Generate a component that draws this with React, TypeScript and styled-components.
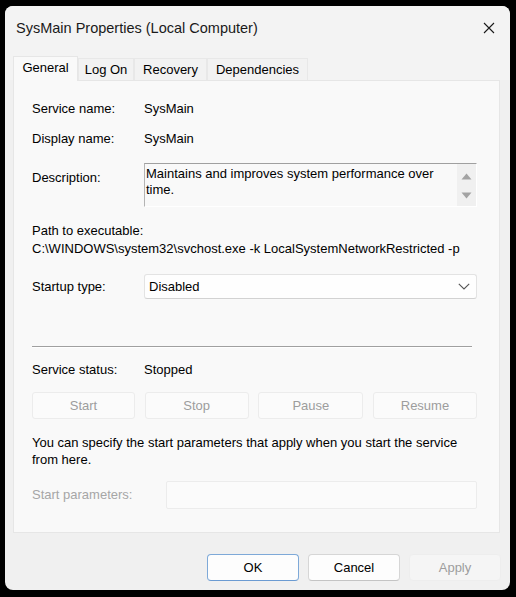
import React from "react";
import styled, { createGlobalStyle } from "styled-components";

const Global = createGlobalStyle`
  html, body { margin: 0; padding: 0; background: #000; }
  body { width: 516px; height: 597px; overflow: hidden; font-family: "Liberation Sans", Arial, sans-serif; }
  * { box-sizing: border-box; }
`;

const Window = styled.div`
  margin: 6px 0 0 5px;
  width: 505px;
  height: 584px;
  border-radius: 8px;
  background: #f0f0f0;
  display: flex;
  flex-direction: column;
  overflow: hidden;
  color: #000;
  font-size: 13px;
`;

const TitleBar = styled.div`
  height: 44px;
  display: flex;
  align-items: center;
  justify-content: space-between;
  padding: 0 15px 0 11px;
  background: #f3f3f3;
`;

const Title = styled.div`
  font-size: 14.5px;
  color: #1a1a1a;
  padding-bottom: 1px;
`;

const CloseIcon = styled.svg`
  width: 12px;
  height: 12px;
  display: block;
`;

const TabStrip = styled.div`
  height: 30px;
  display: flex;
  align-items: flex-end;
  padding-left: 8px;
  background: #f3f3f3;
`;

const Tab = styled.div<{ $w: number; $active?: boolean }>`
  width: ${(p) => p.$w}px;
  height: ${(p) => (p.$active ? 25 : 22)}px;
  display: flex;
  align-items: center;
  justify-content: center;
  background: ${(p) => (p.$active ? "#f9f9f9" : "#f2f2f2")};
  border: 1px solid ${(p) => (p.$active ? "#e6e6e6" : "#e8e8e8")};
  border-bottom: none;
  margin-bottom: ${(p) => (p.$active ? -1 : 0)}px;
  position: relative;
  z-index: ${(p) => (p.$active ? 1 : 0)};
  padding-bottom: ${(p) => (p.$active ? 3 : 0)}px;
  color: #000;
`;

const Panel = styled.div`
  margin: 0 10px 0 8px;
  height: 453px;
  background: #f9f9f9;
  border: 1px solid #e6e6e6;
  padding: 20px 22px 0 18px;
  display: flex;
  flex-direction: column;
`;

const Row = styled.div<{ $top: number; $label?: number; $start?: boolean }>`
  margin-top: ${(p) => p.$top}px;
  display: grid;
  grid-template-columns: ${(p) => p.$label ?? 112}px 1fr;
  align-items: ${(p) => (p.$start ? "start" : "center")};
  line-height: 16px;
`;

const Label = styled.div<{ $dim?: boolean; $pt?: number }>`
  color: ${(p) => (p.$dim ? "#a6a6a6" : "#000")};
  padding-top: ${(p) => p.$pt ?? 0}px;
`;

const Line = styled.div<{ $top: number }>`
  margin-top: ${(p) => p.$top}px;
  line-height: 16px;
  white-space: nowrap;
`;

const DescBox = styled.div`
  height: 44px;
  display: flex;
  border-top: 1px solid #a0a0a0;
  border-left: 1px solid #b4b4b4;
  border-right: 1px solid #ffffff;
  border-bottom: 1px solid #ffffff;
  background: #f9f9f9;
`;

const DescText = styled.div`
  flex: 1;
  padding: 2px 4px 0 1px;
  line-height: 16px;
`;

const ScrollBar = styled.div`
  width: 19px;
  background: #f0f0f0;
  display: flex;
  flex-direction: column;
  align-items: center;
  justify-content: space-between;
  padding: 9px 0 7px;
`;

const Arrow = styled.svg`
  width: 11px;
  height: 7px;
  display: block;
`;

const Select = styled.div`
  height: 25px;
  border: 1px solid #e3e3e3;
  border-bottom-color: #d2d2d2;
  border-radius: 3px;
  background: #fefefe;
  display: flex;
  align-items: center;
  justify-content: space-between;
  padding: 0 6px 0 4px;
`;

const Chevron = styled.svg`
  width: 12px;
  height: 7px;
  display: block;
`;

const Separator = styled.div`
  margin-top: 47px;
  margin-right: 5px;
  height: 2px;
  border-top: 1px solid #a0a0a0;
  border-bottom: 1px solid #ffffff;
`;

const ButtonRow = styled.div`
  margin-top: 14px;
  display: grid;
  grid-template-columns: 103px 104px 105px 104px;
  justify-content: space-between;
`;

const DisabledButton = styled.div`
  height: 27px;
  border: 1px solid #ececec;
  border-radius: 3px;
  background: #fbfbfb;
  color: #9d9d9d;
  display: flex;
  align-items: center;
  justify-content: center;
`;

const Paragraph = styled.div`
  margin-top: 15px;
  line-height: 17px;
`;

const Input = styled.div`
  height: 28px;
  border: 1px solid #ececec;
  border-radius: 2px;
  background: #fbfbfb;
`;

const Footer = styled.div`
  display: flex;
  justify-content: flex-end;
  gap: 9px;
  padding: 21px 9px 0 0;
`;

const FooterButton = styled.div<{ $variant?: "default" | "disabled" }>`
  width: 92px;
  height: 27px;
  border-radius: 4px;
  display: flex;
  align-items: center;
  justify-content: center;
  background: ${(p) => (p.$variant === "disabled" ? "#f5f5f5" : "#fdfdfd")};
  color: ${(p) => (p.$variant === "disabled" ? "#9d9d9d" : "#000")};
  border: 1px solid
    ${(p) =>
      p.$variant === "default"
        ? "#7ea9d8"
        : p.$variant === "disabled"
        ? "#ededed"
        : "#d6d6d6"};
  border-bottom-color: ${(p) =>
    p.$variant === "default" ? "#6b9bd2" : p.$variant === "disabled" ? "#ededed" : "#c4c4c4"};
`;

export default function App() {
  return (
    <>
      <Global />
      <Window>
        <TitleBar>
          <Title>SysMain Properties (Local Computer)</Title>
          <CloseIcon viewBox="0 0 12 12">
            <path d="M1 1 L11 11 M11 1 L1 11" stroke="#1a1a1a" strokeWidth="1.1" fill="none" />
          </CloseIcon>
        </TitleBar>
        <TabStrip>
          <Tab $w={65} $active>General</Tab>
          <Tab $w={56}>Log On</Tab>
          <Tab $w={73}>Recovery</Tab>
          <Tab $w={101}>Dependencies</Tab>
        </TabStrip>
        <Panel>
          <Row $top={0}>
            <Label>Service name:</Label>
            <div>SysMain</div>
          </Row>
          <Row $top={14}>
            <Label>Display name:</Label>
            <div>SysMain</div>
          </Row>
          <Row $top={16} $start>
            <Label $pt={7}>Description:</Label>
            <DescBox>
              <DescText>Maintains and improves system performance over time.</DescText>
              <ScrollBar>
                <Arrow viewBox="0 0 11 7">
                  <path d="M5.5 0.5 L10.5 6.5 L0.5 6.5 Z" fill="#a3a3a3" />
                </Arrow>
                <Arrow viewBox="0 0 11 7">
                  <path d="M0.5 0.5 L10.5 0.5 L5.5 6.5 Z" fill="#a3a3a3" />
                </Arrow>
              </ScrollBar>
            </DescBox>
          </Row>
          <Line $top={16}>Path to executable:</Line>
          <Line $top={2}>C:\WINDOWS\system32\svchost.exe -k LocalSystemNetworkRestricted -p</Line>
          <Row $top={17}>
            <Label>Startup type:</Label>
            <Select>
              <span>Disabled</span>
              <Chevron viewBox="0 0 12 7">
                <path d="M0.8 0.8 L6 6 L11.2 0.8" stroke="#555" strokeWidth="1.1" fill="none" />
              </Chevron>
            </Select>
          </Row>
          <Separator />
          <Row $top={14}>
            <Label>Service status:</Label>
            <div>Stopped</div>
          </Row>
          <ButtonRow>
            <DisabledButton>Start</DisabledButton>
            <DisabledButton>Stop</DisabledButton>
            <DisabledButton>Pause</DisabledButton>
            <DisabledButton>Resume</DisabledButton>
          </ButtonRow>
          <Paragraph>
            You can specify the start parameters that apply when you start the service
            <br />
            from here.
          </Paragraph>
          <Row $top={13} $label={134}>
            <Label $dim>Start parameters:</Label>
            <Input />
          </Row>
        </Panel>
        <Footer>
          <FooterButton $variant="default">OK</FooterButton>
          <FooterButton>Cancel</FooterButton>
          <FooterButton $variant="disabled">Apply</FooterButton>
        </Footer>
      </Window>
    </>
  );
}
